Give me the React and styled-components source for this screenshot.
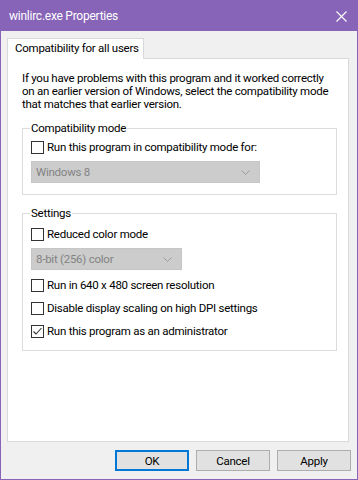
import React from "react";
import styled, { createGlobalStyle } from "styled-components";

const purple = "#8764b8";

const GlobalStyle = createGlobalStyle`
  html, body {
    margin: 0;
    padding: 0;
    background: #f0f0f0;
  }
  body {
    font-family: "Segoe UI", Roboto, "Liberation Sans", sans-serif;
    font-size: 11.5px;
    letter-spacing: -0.25px;
    color: #000;
  }
  #root {
    width: 358px;
    height: 480px;
  }
`;

const Window = styled.div`
  box-sizing: border-box;
  width: 358px;
  height: 480px;
  display: flex;
  flex-direction: column;
  background: #f0f0f0;
  border: 1px solid ${purple};
`;

const TitleBar = styled.div`
  height: 30px;
  flex: none;
  display: flex;
  align-items: center;
  justify-content: space-between;
  padding: 0 10px 0 8px;
  background: ${purple};
  color: #fff;
`;

const Title = styled.span`
  font-size: 12px;
  line-height: 16px;
`;

const Body = styled.div`
  flex: 1;
  display: flex;
  flex-direction: column;
  padding: 7px 8px 8px 6px;
  min-height: 0;
`;

const TabStrip = styled.div`
  display: flex;
`;

const Tab = styled.div`
  position: relative;
  z-index: 1;
  height: 20px;
  margin-bottom: -1px;
  padding: 0 4px 0 7px;
  background: #fff;
  border: 1px solid #d9d9d9;
  border-bottom: none;
  line-height: 19px;
  white-space: nowrap;
`;

const Panel = styled.div`
  flex: 1;
  display: flex;
  flex-direction: column;
  background: #fff;
  border: 1px solid #d9d9d9;
  padding: 13px 11px 0 14px;
`;

const Intro = styled.p`
  margin: 0;
  line-height: 13px;
  white-space: nowrap;
`;

const Group = styled.fieldset`
  margin: ${(p) => p.$top}px 0 0 0;
  padding: 4px 8px ${(p) => p.$bottom}px 8px;
  border: 1px solid #dcdcdc;
  min-width: 0;
  display: flex;
  flex-direction: column;
  align-items: flex-start;
`;

const Legend = styled.legend`
  padding: 0 1px;
  margin-left: -1px;
  line-height: 15px;
`;

const CheckRow = styled.label`
  display: flex;
  align-items: center;
  gap: 3px;
  height: 15px;
  line-height: 15px;
  margin-top: ${(p) => p.$top || 0}px;
  white-space: nowrap;
`;

const Box = styled.span`
  box-sizing: border-box;
  width: 13px;
  height: 13px;
  flex: none;
  display: flex;
  align-items: center;
  justify-content: center;
  background: #fff;
  border: 1px solid #333;
`;

const Select = styled.div`
  box-sizing: border-box;
  width: ${(p) => p.$width}px;
  height: 22px;
  flex: none;
  margin-top: ${(p) => p.$top}px;
  display: flex;
  align-items: center;
  justify-content: space-between;
  padding: 0 9px 0 4px;
  background: #cccccc;
  border: 1px solid #c6c6c6;
  color: #838383;
`;

const ButtonRow = styled.div`
  display: flex;
  justify-content: flex-end;
  gap: 7px;
  margin: 8px -2px 0 0;
`;

const Button = styled.button`
  box-sizing: border-box;
  width: 74px;
  height: 21px;
  padding: 0;
  font: inherit;
  letter-spacing: inherit;
  color: #000;
  background: #e1e1e1;
  border: ${(p) => (p.$default ? "2px solid #0078d7" : "1px solid #adadad")};
`;

const CloseIcon = () => (
  <svg width="11" height="11" viewBox="0 0 11 11">
    <path d="M0.5 0.5L10.5 10.5M10.5 0.5L0.5 10.5" stroke="#fff" strokeWidth="1.1" />
  </svg>
);

const Chevron = () => (
  <svg width="9" height="5" viewBox="0 0 9 5">
    <path d="M0.5 0.5L4.5 4.5L8.5 0.5" fill="none" stroke="#9c9c9c" strokeWidth="1" />
  </svg>
);

const Check = ({ label, checked, top }) => (
  <CheckRow $top={top}>
    <Box>
      {checked && (
        <svg width="11" height="11" viewBox="0 0 11 11">
          <path d="M1.5 5.5L4 8L9.5 2" fill="none" stroke="#333" strokeWidth="1.1" />
        </svg>
      )}
    </Box>
    {label}
  </CheckRow>
);

export default function App() {
  return (
    <>
      <GlobalStyle />
      <Window>
        <TitleBar>
          <Title>winlirc.exe Properties</Title>
          <CloseIcon />
        </TitleBar>
        <Body>
          <TabStrip>
            <Tab>Compatibility for all users</Tab>
          </TabStrip>
          <Panel>
            <Intro>
              If you have problems with this program and it worked correctly
              <br />
              on an earlier version of Windows, select the compatibility mode
              <br />
              that matches that earlier version.
            </Intro>
            <Group $top={10} $bottom={11}>
              <Legend>Compatibility mode</Legend>
              <Check label="Run this program in compatibility mode for:" />
              <Select $width={229} $top={6}>
                Windows 8
                <Chevron />
              </Select>
            </Group>
            <Group $top={11} $bottom={11}>
              <Legend>Settings</Legend>
              <Check label="Reduced color mode" top={2} />
              <Select $width={151} $top={6}>
                8-bit (256) color
                <Chevron />
              </Select>
              <Check label="Run in 640 x 480 screen resolution" top={8} />
              <Check label="Disable display scaling on high DPI settings" top={8} />
              <Check label="Run this program as an administrator" checked top={8} />
            </Group>
          </Panel>
          <ButtonRow>
            <Button $default>OK</Button>
            <Button>Cancel</Button>
            <Button>Apply</Button>
          </ButtonRow>
        </Body>
      </Window>
    </>
  );
}
